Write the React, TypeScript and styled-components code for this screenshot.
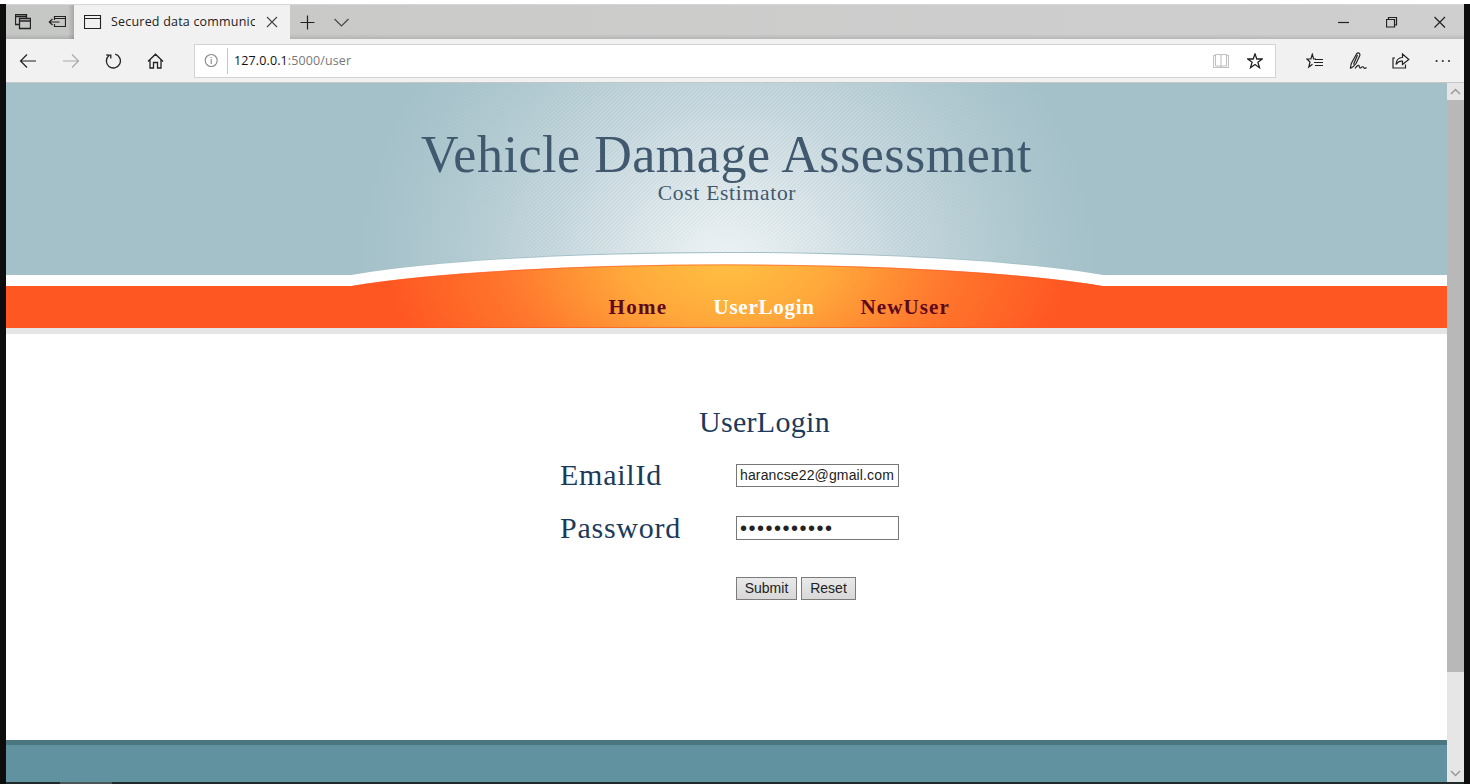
import React from "react";
import styled, { createGlobalStyle } from "styled-components";

const Global = createGlobalStyle`
  * { box-sizing: border-box; }
  body { margin: 0; background: #fff; overflow: hidden; }
`;

const serif = `"Liberation Serif", Georgia, serif`;
const ui = `"Open Sans", "Noto Sans", sans-serif`;

const Screen = styled.div`
  display: flex;
  flex-direction: column;
  width: 1470px;
  height: 784px;
  border-top: 4px solid #fff;
  background: #0d0d0d;
  overflow: hidden;
`;
const Window = styled.div`
  display: flex;
  flex-direction: column;
  height: 778px;
  margin: 0 6px;
  background: #fff;
  font-family: ${ui};
`;
const Taskbar = styled.div`
  height: 2px;
  margin: 0 6px;
  background: linear-gradient(90deg, #222b2c 54px, #4a5658 54px 106px, #222b2c 106px);
`;
const TabStrip = styled.div`
  display: flex;
  height: 35px;
  flex: none;
  border-top: 1px solid #d6d6d6;
  background: linear-gradient(#0000 29px, #0000001c), linear-gradient(90deg, #c5c7c4, #cbcbca 30%, #cfcfcf);
`;
const TabTools = styled.div`
  display: flex;
  align-items: center;
  width: 68px;
  padding: 0 0 0 9px;
  gap: 17px;
  background: linear-gradient(90deg, #0000 62px, #00000028);
`;
const Tab = styled.div`
  display: flex;
  align-items: center;
  width: 216px;
  height: 35px;
  padding: 0 12px 2px 10px;
  background: #f1f1f1;
`;
const TabTitle = styled.span`
  width: 144px;
  margin: 0 11px 0 9px;
  overflow: hidden;
  white-space: nowrap;
  font-size: 12.5px;
  letter-spacing: 0.2px;
  color: #222;
`;
const TabActions = styled.div`
  display: flex;
  align-items: center;
  gap: 18px;
  padding-left: 9px;
`;
const WindowControls = styled.div`
  display: flex;
  align-items: center;
  gap: 36px;
  margin-left: auto;
  padding-right: 18px;
`;
const Toolbar = styled.div`
  display: flex;
  align-items: center;
  height: 44px;
  flex: none;
  background: #f1f1f1;
  border-bottom: 1px solid #c3c6c7;
`;
const NavButtons = styled.div`
  display: flex;
  align-items: center;
  gap: 25px;
  width: 188px;
  padding-left: 13px;
`;
const Address = styled.div`
  display: flex;
  align-items: center;
  width: 1082px;
  height: 34px;
  border: 1px solid #d3d3d3;
  background: #fff;
  padding: 0 12px 0 9px;
  font-size: 12.5px;
  letter-spacing: 0.12px;
  color: #777;
`;
const Divider = styled.i`
  width: 1px;
  height: 26px;
  margin: 0 6px 0 8px;
  background: #c8c8c8;
`;
const Host = styled.span`
  color: #111;
`;
const AddressActions = styled.div`
  display: flex;
  gap: 18px;
  margin-left: auto;
`;
const ToolbarActions = styled.div`
  display: flex;
  align-items: center;
  gap: 25px;
  padding-left: 30px;
`;
const Viewport = styled.div`
  display: flex;
  flex: 1;
  min-height: 0;
`;
const Page = styled.div`
  display: flex;
  flex-direction: column;
  width: 1441px;
  background: #fff;
  font-family: ${serif};
`;
const Banner = styled.header`
  display: grid;
  grid-template: 251px / 1441px;
  flex: none;
`;
const Bands = styled.div`
  grid-area: 1 / 1;
  display: grid;
  grid-template-rows: 192px 11px 42px 6px;
`;
const Band = styled.div<{ $color: string }>`
  background: ${(p) => p.$color};
`;
const Glow = styled.svg`
  grid-area: 1 / 1;
  display: block;
`;
const BannerText = styled.div`
  grid-area: 1 / 1;
  display: flex;
  flex-direction: column;
  align-items: center;
`;
const Title = styled.h1`
  margin: 42px 0 0;
  font-weight: 400;
  font-size: 52px;
  line-height: 60px;
  letter-spacing: 0.52px;
  color: #41596f;
`;
const Subtitle = styled.p`
  margin: -4px 0 0 1px;
  font-size: 21.5px;
  line-height: 24px;
  letter-spacing: 0.72px;
  color: #41596f;
`;
const Menu = styled.nav`
  display: flex;
  width: 100%;
  margin-top: 90px;
  padding-left: 602.5px;
`;
const MenuLink = styled.a<{ $active?: boolean; $width: number; $track: number }>`
  width: ${(p) => p.$width}px;
  font-size: 21px;
  line-height: 24px;
  font-weight: 700;
  letter-spacing: ${(p) => p.$track}px;
  color: ${(p) => (p.$active ? "#fff" : "#5e0a1c")};
`;
const Login = styled.form`
  display: flex;
  flex-direction: column;
  flex: 1;
  padding: 70px 0 0 554px;
  color: #1c3a5a;
`;
const Heading = styled.h2`
  margin: 0 0 0 139px;
  font-size: 30px;
  line-height: 36px;
  font-weight: 400;
  letter-spacing: 0.3px;
`;
const Field = styled.label`
  display: flex;
  align-items: center;
  height: 36px;
  margin-top: 17px;
  font-size: 30px;
  letter-spacing: 0.75px;
`;
const Caption = styled.span`
  width: 176px;
`;
const Box = styled.span<{ $height: number }>`
  display: flex;
  align-items: center;
  width: 163px;
  height: ${(p) => p.$height}px;
  padding: 0 3px;
  border: 1px solid #777;
  background: #fff;
  font: 14px "Liberation Sans", Arial, sans-serif;
  letter-spacing: 0.14px;
  color: #222;
`;
const Masked = styled.span`
  font: 20px/20px "Liberation Sans", Arial, sans-serif;
  letter-spacing: 1.5px;
`;
const Buttons = styled.div`
  display: flex;
  gap: 4px;
  margin: 31px 0 0 176px;
`;
const Button = styled.button<{ $width: number }>`
  width: ${(p) => p.$width}px;
  height: 23px;
  padding: 0 0 1px;
  border: 1px solid #7c7c7c;
  border-radius: 0;
  background: linear-gradient(#e9e9e9, #d8d8d8);
  font: 14px "Liberation Sans", Arial, sans-serif;
  color: #222;
`;
const Footer = styled.footer`
  height: 42px;
  border-top: 5px solid #4a7680;
  background: #6192a0;
`;
const Scrollbar = styled.div`
  display: flex;
  flex-direction: column;
  align-items: center;
  width: 17px;
  background: #e6e6e6;
`;
const Thumb = styled.div`
  width: 17px;
  height: 572px;
  margin-bottom: auto;
  background: #b8b8b8;
`;
const ScrollArrow = styled.svg`
  width: 17px;
  height: 17px;
  flex: none;
`;
const Glyph = styled.svg`
  flex: none;
  fill: none;
`;

const Icon = ({ w = 16, h = 16, d, color = "#222", sw = 1.1 }: { w?: number; h?: number; d: string; color?: string; sw?: number }) => (
  <Glyph width={w} height={h} viewBox={`0 0 ${w} ${h}`} stroke={color} strokeWidth={sw}>
    <path d={d} />
  </Glyph>
);

const STAR = "M8 .9L9.8 6H15.2L10.9 9.3L12.5 14.7L8 11.5L3.5 14.7L5.1 9.3L.8 6H6.2Z";

export default function App() {
  return (
    <Screen>
      <Global />
      <Window>
        <TabStrip>
          <TabTools>
            <Icon d="M4 10.5H.5V.5H11.5V4M.5 2.5H11.5M4.5 4.5H15.5V14.5H4.5ZM4.5 7H15.5" sw={1.3} />
            <Icon w={18} d="M6.5 6V2.5H17.5V12.5H6.5V10M6.5 4.5H17.5M1 8H11.5M4.5 5L1.3 8L4.5 11" sw={1.2} />
          </TabTools>
          <Tab>
            <Icon w={18} d="M.5 1.5H16.5V14.5H.5ZM.5 4.5H16.5" />
            <TabTitle>Secured data communic</TabTitle>
            <Icon w={12} h={12} d="M1 1L11 11M11 1L1 11" color="#444" />
          </Tab>
          <TabActions>
            <Icon d="M8.5 1.5V15.5M1.5 8.5H15.5" sw={1.2} />
            <Icon d="M1.5 5L8.5 12L15.5 5" color="#444" />
          </TabActions>
          <WindowControls>
            <Icon w={12} h={12} d="M0 6.5H11" sw={1.2} />
            <Icon w={12} h={12} d="M.5 3.5H8.5V11H.5ZM2.5 3.5V1.5H10.5V9H8.5" sw={1.2} />
            <Icon w={12} h={12} d="M.5 1L11 11.5M11 1L.5 11.5" sw={1.2} />
          </WindowControls>
        </TabStrip>
        <Toolbar>
          <NavButtons>
            <Icon w={18} d="M17 8H1.5M8 1.5L1.5 8L8 14.5" sw={1.2} />
            <Icon w={18} d="M1 8H16.5M10 1.5L16.5 8L10 14.5" color="#aaa" sw={1.2} />
            <Icon w={17} d="M4 2.5A7 7 0 1 0 10.2 1.2M2 1.2V2.2H5.8V5.5" sw={1.3} />
            <Icon w={17} d="M1 8.5L8.5 1.2L16 8.5M3 7V15H6.5V9.5H10.5V15H14V7" sw={1.3} />
          </NavButtons>
          <Address>
            <Icon w={15} h={15} d="M1.2 7.5A6 6 0 1 0 13.2 7.5A6 6 0 1 0 1.2 7.5ZM7.2 6V11M7.2 4V5" color="#888" />
            <Divider />
            <Host>127.0.0.1</Host>:5000/user
            <AddressActions>
              <Icon w={16} d="M2.5 2.5H.5V14.5H15.5V2.5H13.5M2.5 13V1.5H7L8 2.5L9 1.5H13.5V13H9L8 14L7 13H2.5M8 2.5V14" color="#c2c2c2" />
              <Icon d={STAR} sw={1.3} />
            </AddressActions>
          </Address>
          <ToolbarActions>
            <Icon w={18} d="M10 6H7.6L6.3 1.2L4.9 6H.8L4 9L2.8 14L6.5 11.2M9 6.5H17M8 9.5H17M9 12.5H17" sw={1.2} />
            <Icon w={18} h={18} d="M1.3 16.5L2.3 11.5L7.5 2Q9 .3 10.3 1.3Q11.3 2.3 10.6 4L7 11.5Q5 14.5 1.3 16.5M8.5 3L4.5 12.5M6 16.5Q9.5 11.5 10.2 14.3Q10.5 17 12.5 15.2Q14.2 14 15 16Q16 16.8 17.5 15.5" sw={1.2} />
            <Icon w={18} d="M3 5H1V15H13.5V11.5M4 11.5Q4.5 4.5 10.5 4.5V1L16.8 6.5L10.5 11.5V8.2Q6.5 7.5 4 11.5Z" sw={1.2} />
            <svg width="16" height="4" fill="#333"><circle cx="1.6" cy="2" r="1.1" /><circle cx="7.8" cy="2" r="1.1" /><circle cx="14" cy="2" r="1.1" /></svg>
          </ToolbarActions>
        </Toolbar>
        <Viewport>
          <Page>
            <Banner>
              <Bands>
                <Band $color="#a4c0c9" />
                <Band $color="#fff" />
                <Band $color="#ff5722" />
                <Band $color="#e5e5e5" />
              </Bands>
              <Glow width="1441" height="251" viewBox="0 0 1441 251">
                <defs>
                  <radialGradient id="sky" gradientUnits="userSpaceOnUse" cx="0" cy="0" r="1" gradientTransform="translate(721 190) scale(370 350)">
                    <stop offset="0" stopColor="#edf3f5" />
                    <stop offset=".25" stopColor="#d7e3e7" />
                    <stop offset=".5" stopColor="#c0d3da" />
                    <stop offset=".75" stopColor="#afc8cf" />
                    <stop offset="1" stopColor="#a4c0c9" />
                  </radialGradient>
                  <radialGradient id="sun" gradientUnits="userSpaceOnUse" cx="0" cy="0" r="1" gradientTransform="translate(721 178) scale(340 200)">
                    <stop offset="0" stopColor="#ffc043" />
                    <stop offset=".3" stopColor="#ffa93b" />
                    <stop offset=".65" stopColor="#ff772d" />
                    <stop offset="1" stopColor="#ff5722" />
                  </radialGradient>
                  <radialGradient id="fade" gradientUnits="userSpaceOnUse" cx="0" cy="0" r="1" gradientTransform="translate(721 130) scale(350 280)">
                    <stop offset="0" stopColor="#fff" />
                    <stop offset="1" stopColor="#000" />
                  </radialGradient>
                  <pattern id="hatch" width="4" height="4" patternUnits="userSpaceOnUse">
                    <path d="M-1 5L5 -1M-1 1L1 -1M3 5L5 3" stroke="#fff" strokeWidth=".9" />
                  </pattern>
                  <mask id="soft"><rect width="1441" height="192" fill="url(#fade)" /></mask>
                </defs>
                <rect x="348" width="746" height="192" fill="url(#sky)" />
                <rect x="348" width="746" height="192" fill="url(#hatch)" opacity=".4" mask="url(#soft)" />
                <path d="M345 192A440 46 0 0 1 1097 192" fill="none" stroke="#a4c0c9" strokeWidth="2" />
                <path d="M345 192A440 46 0 0 1 1097 192V203H345Z" fill="#fff" />
                <path d="M346 203A440 45 0 0 1 1096 203V245H346Z" fill="url(#sun)" />
                <path d="M346 203.3A440 45 0 0 1 1096 203.3M346 244.5H1096" fill="none" stroke="#ff5722" strokeOpacity=".6" />
              </Glow>
              <BannerText>
                <Title>Vehicle Damage Assessment</Title>
                <Subtitle>Cost Estimator</Subtitle>
                <Menu>
                  <MenuLink $width={105} $track={1.3}>Home</MenuLink>
                  <MenuLink $width={147} $track={0.75} $active>UserLogin</MenuLink>
                  <MenuLink $width={100} $track={1.1}>NewUser</MenuLink>
                </Menu>
              </BannerText>
            </Banner>
            <Login>
              <Heading>UserLogin</Heading>
              <Field>
                <Caption>EmailId</Caption>
                <Box $height={23}>harancse22@gmail.com</Box>
              </Field>
              <Field>
                <Caption>Password</Caption>
                <Box $height={24}><Masked>•••••••••••</Masked></Box>
              </Field>
              <Buttons>
                <Button type="button" $width={61}>Submit</Button>
                <Button type="button" $width={55}>Reset</Button>
              </Buttons>
            </Login>
            <Footer />
          </Page>
          <Scrollbar>
            <ScrollArrow fill="none" stroke="#999" strokeWidth="1.5"><path d="M4 11L8.5 6.5L13 11" /></ScrollArrow>
            <Thumb />
            <ScrollArrow fill="none" stroke="#999" strokeWidth="1.5"><path d="M4 6L8.5 10.5L13 6" /></ScrollArrow>
          </Scrollbar>
        </Viewport>
      </Window>
      <Taskbar />
    </Screen>
  );
}
